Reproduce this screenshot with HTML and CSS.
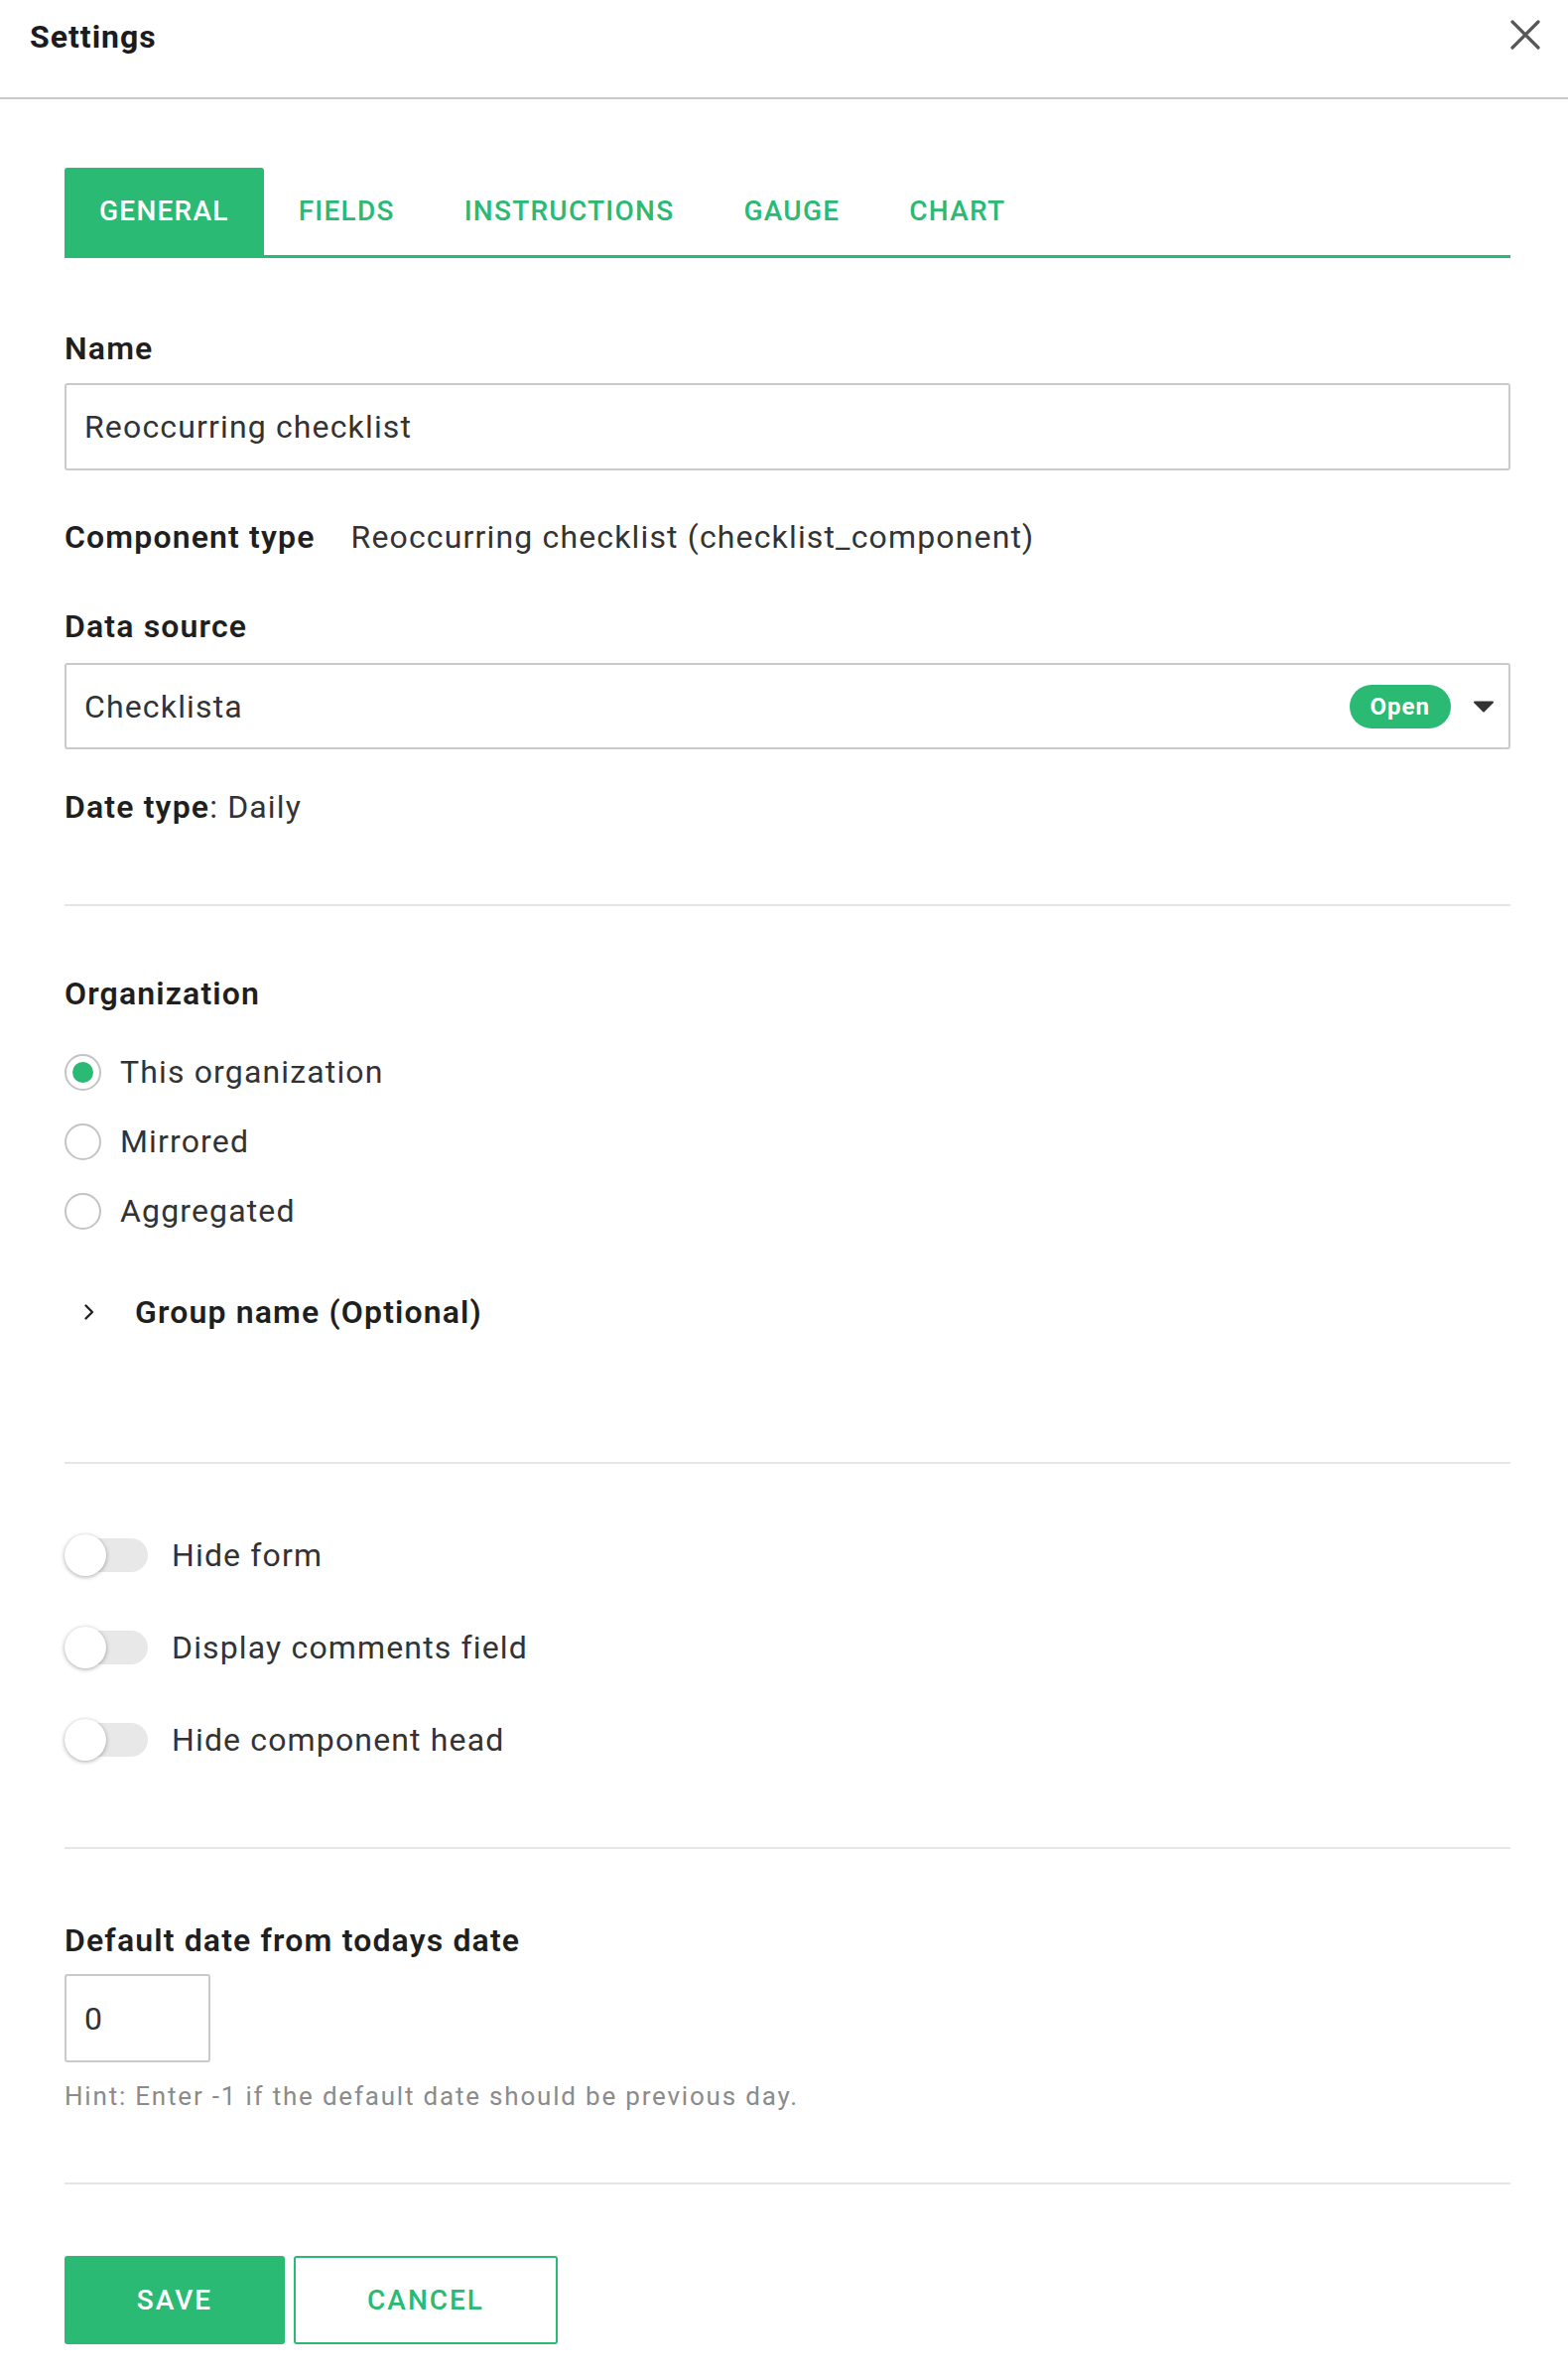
FILE: index.html
```html
<!DOCTYPE html>
<html lang="en">
<head>
<meta charset="utf-8">
<title>Settings</title>
<link rel="stylesheet" href="styles.css">
</head>
<body>
<div class="modal">
  <header class="hdr">
    <span class="title">Settings</span>
    <button class="close" aria-label="Close">
      <svg width="32" height="32" viewBox="0 0 32 32"><path d="M3 3 L29 29 M29 3 L3 29" stroke="#575757" stroke-width="3.2" stroke-linecap="round" fill="none"/></svg>
    </button>
  </header>
  <main class="content">
    <nav class="tabs">
      <span class="tab active">GENERAL</span>
      <span class="tab">FIELDS</span>
      <span class="tab">INSTRUCTIONS</span>
      <span class="tab">GAUGE</span>
      <span class="tab">CHART</span>
    </nav>

    <div class="lbl name-lbl">Name</div>
    <div class="field">Reoccurring checklist</div>

    <div class="kv"><span class="b">Component type</span><span class="val">Reoccurring checklist (checklist_component)</span></div>

    <div class="lbl ds-lbl">Data source</div>
    <div class="field select">
      <span class="sel-text">Checklista</span>
      <span class="badge">Open</span>
      <svg class="caret" width="22" height="12" viewBox="0 0 22 12"><path d="M2 1.5 H20 L11 10.5 Z" fill="#333" stroke="#333" stroke-width="2" stroke-linejoin="round"/></svg>
    </div>

    <div class="datetype"><span class="b">Date type</span>: Daily</div>

    <hr class="div div1">

    <div class="lbl org-lbl">Organization</div>
    <div class="radios">
      <div class="radio-row"><span class="radio checked"></span><span>This organization</span></div>
      <div class="radio-row"><span class="radio"></span><span>Mirrored</span></div>
      <div class="radio-row"><span class="radio"></span><span>Aggregated</span></div>
    </div>

    <div class="group">
      <svg class="chev" width="14" height="18" viewBox="0 0 14 18"><path d="M3.5 2.5 L10 9 L3.5 15.5" stroke="#222" stroke-width="2.4" fill="none" stroke-linecap="round" stroke-linejoin="round"/></svg>
      <span class="b">Group name (Optional)</span>
    </div>

    <hr class="div div2">

    <div class="toggles">
      <div class="toggle-row"><span class="toggle"><span class="knob"></span></span><span>Hide form</span></div>
      <div class="toggle-row"><span class="toggle"><span class="knob"></span></span><span>Display comments field</span></div>
      <div class="toggle-row"><span class="toggle"><span class="knob"></span></span><span>Hide component head</span></div>
    </div>

    <hr class="div div3">

    <div class="lbl def-lbl">Default date from todays date</div>
    <div class="field small">0</div>
    <div class="hint">Hint: Enter -1 if the default date should be previous day.</div>

    <hr class="div div4">

    <div class="actions">
      <button class="btn save">SAVE</button>
      <button class="btn cancel">CANCEL</button>
    </div>
  </main>
</div>
</body>
</html>
```

FILE: styles.css
```css
* { box-sizing: border-box; }

html, body {
  margin: 0;
  padding: 0;
  background: #fff;
}

body {
  font-family: Roboto, "Liberation Sans", Arial, sans-serif;
  font-size: 32px;
  letter-spacing: 1.15px;
  color: #2a2a2a;
}

.modal {
  width: 1580px;
  min-height: 2393px;
  background: #fff;
}

.hdr {
  height: 100px;
  border-bottom: 2px solid #c9c9c9;
  display: flex;
  justify-content: space-between;
  align-items: flex-start;
  padding: 15px 27px 0 30px;
}

.title {
  font-size: 32px;
  font-weight: 700;
  line-height: 44px;
  color: #1c1c1e;
  letter-spacing: 1px;
}

.close {
  margin-top: 4px;
  width: 32px;
  height: 32px;
  padding: 0;
  border: 0;
  background: none;
  display: block;
}

.close svg { display: block; }

.content {
  padding: 69px 58px 30px 65px;
}

/* tabs */
.tabs {
  display: flex;
  height: 91px;
  border-bottom: 3px solid #2bba73;
}

.tab {
  padding: 0 35px;
  height: 88px;
  line-height: 88px;
  font-size: 28px;
  font-weight: 500;
  letter-spacing: 1.25px;
  color: #2bba73;
}

.tab.active {
  background: #2bba73;
  color: #fff;
  border-radius: 3px 3px 0 0;
}

/* labels and fields */
.lbl, .b {
  font-weight: 600;
  color: #1f1f1f;
}

.lbl {
  line-height: 40px;
}

.name-lbl { margin-top: 71px; }
.ds-lbl { margin-top: 50px; }
.org-lbl { margin-top: 68px; }
.def-lbl { margin-top: 72px; }

.field {
  margin-top: 15px;
  height: 88px;
  border: 2px solid #cacaca;
  border-radius: 3px;
  padding: 0 18px;
  display: flex;
  align-items: center;
  color: #333;
}

.select {
  margin-top: 17px;
  height: 87px;
  padding-right: 14px;
}

.sel-text { flex: 1; }

.badge {
  height: 44px;
  line-height: 44px;
  padding: 0 21px;
  border-radius: 22px;
  background: #2bba73;
  color: #fff;
  font-size: 24px;
  font-weight: 700;
  letter-spacing: 1px;
}

.caret {
  margin-left: 22px;
  display: block;
}

.kv {
  margin-top: 47px;
  line-height: 40px;
  display: flex;
  gap: 36px;
}

.val { color: #333; }

.datetype {
  margin-top: 38px;
  line-height: 40px;
  color: #333;
}

.div {
  border: 0;
  height: 2px;
  background: #e6e6e6;
  margin: 0;
}

.div1 { margin-top: 78px; }
.div2 { margin-top: 131px; }
.div3 { margin-top: 86px; }
.div4 { margin-top: 70px; }

/* radios */
.radios {
  margin-top: 39px;
  display: flex;
  flex-direction: column;
  gap: 30px;
}

.radio-row {
  display: flex;
  align-items: center;
  height: 40px;
  gap: 19px;
  color: #333;
}

.radio {
  width: 37px;
  height: 37px;
  border: 2px solid #c4c4c4;
  border-radius: 50%;
  display: flex;
  align-items: center;
  justify-content: center;
  flex: none;
}

.radio.checked::after {
  content: "";
  width: 21px;
  height: 21px;
  border-radius: 50%;
  background: #2bba73;
}

.group {
  margin-top: 62px;
  line-height: 40px;
  display: flex;
  align-items: center;
  padding-left: 83px;
  position: relative;
}

.group .chev {
  position: absolute;
  left: 18px;
  top: 11px;
}

.group .b { margin-left: -12px; }

/* toggles */
.toggles {
  margin-top: 70px;
  display: flex;
  flex-direction: column;
  gap: 49px;
}

.toggle-row {
  display: flex;
  align-items: center;
  height: 44px;
  gap: 24px;
  color: #333;
}

.toggle {
  width: 84px;
  height: 34px;
  background: #e8e8e8;
  border-radius: 17px;
  display: flex;
  align-items: center;
  flex: none;
}

.knob {
  width: 42px;
  height: 42px;
  border-radius: 50%;
  background: #fff;
  box-shadow: 0 1px 4px rgba(0, 0, 0, 0.35);
}

/* default date */
.field.small {
  margin-top: 14px;
  width: 147px;
  height: 89px;
}

.hint {
  margin-top: 17px;
  line-height: 34px;
  font-size: 26px;
  letter-spacing: 1.8px;
  color: #8b8b8b;
}

/* buttons */
.actions {
  margin-top: 72px;
  display: flex;
  gap: 9px;
}

.btn {
  height: 89px;
  border-radius: 3px;
  font-family: Roboto, "Liberation Sans", Arial, sans-serif;
  font-size: 28px;
  font-weight: 500;
  letter-spacing: 2px;
  padding: 0;
}

.save {
  width: 222px;
  background: #2bba73;
  border: 2px solid #2bba73;
  color: #fff;
}

.cancel {
  width: 266px;
  background: #fff;
  border: 2px solid #2bba73;
  color: #2bba73;
}
```
